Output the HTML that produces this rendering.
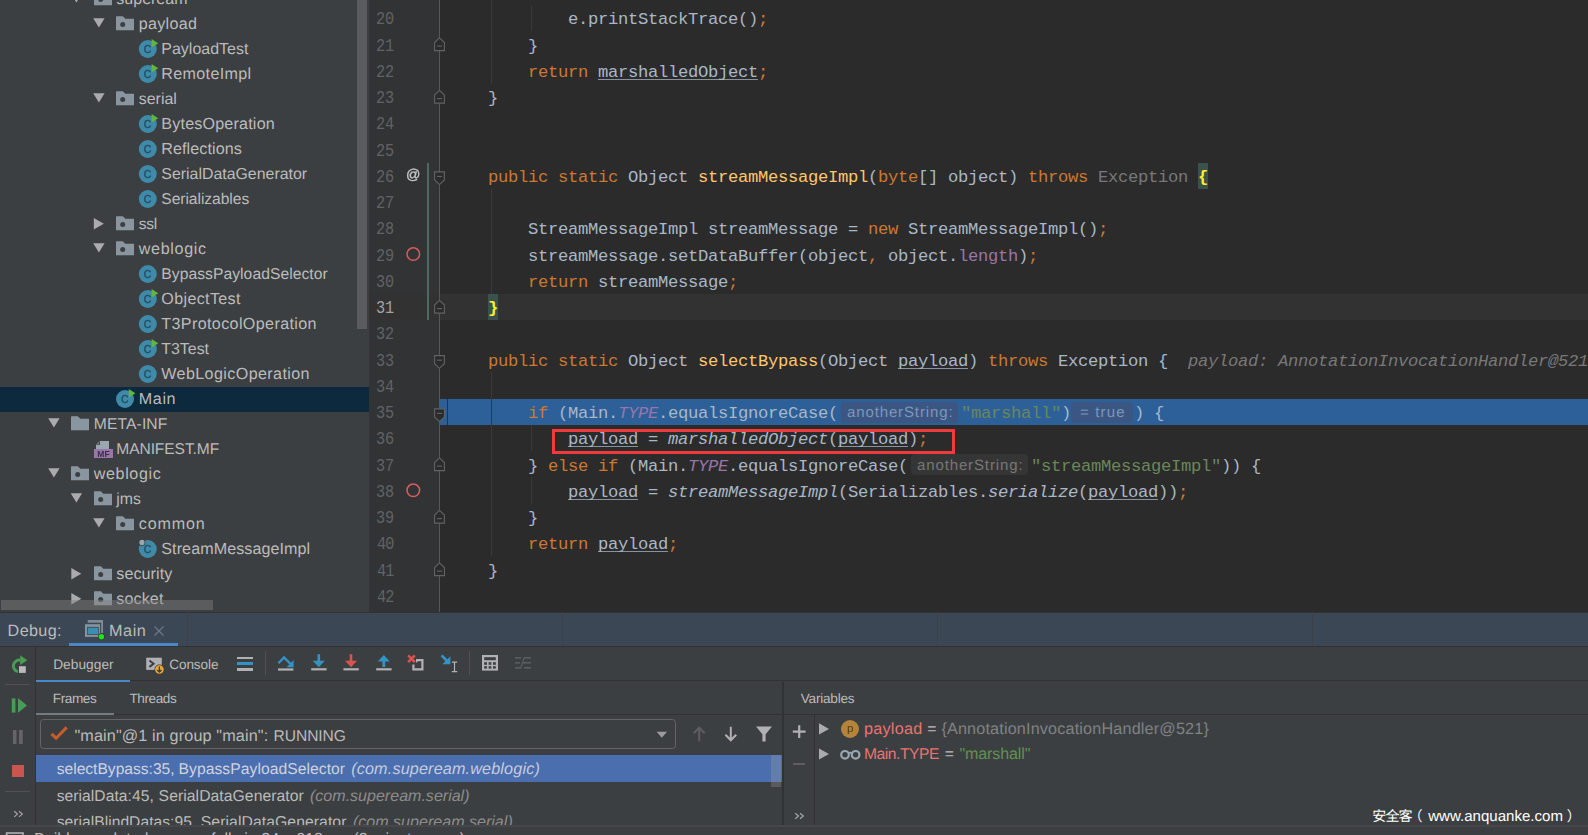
<!DOCTYPE html>
<html lang="en"><head><meta charset="utf-8"><title>IntelliJ IDEA - Debug</title>
<style>
html,body{margin:0;padding:0;background:#3c3f41;}
body{width:1588px;height:835px;overflow:hidden;position:relative;font-family:"Liberation Sans","Noto Sans CJK SC",sans-serif;}
#root{position:absolute;left:0;top:0;width:1588px;height:835px;overflow:hidden;background:#3c3f41;}
#root div,#root svg{pointer-events:none}
</style></head><body><div id="root">
<div style="position:absolute;left:0px;top:0px;width:369px;height:612px;background:#3c3f41;"></div>
<div style="position:absolute;left:0px;top:387px;width:369px;height:25px;background:#0d293e;"></div>
<svg style="position:absolute;left:70px;top:-7px;" width="13" height="11" viewBox="0 0 13 11"><g transform="translate(0.7,0.3)"><polygon points="0,0 11.4,0 5.7,9.2" fill="#a9abad"/></g></svg>
<svg style="position:absolute;left:94px;top:-9px;" width="18" height="15" viewBox="0 0 18 15"><g transform="translate(0,0.3)"><path d="M0,0.8 Q0,0 0.8,0 H6.9 L9.3,2.5 H18 V14 H0 Z" fill="#8a969f"/><circle cx="6.7" cy="8.2" r="2.5" fill="#3c3f41"/></g></svg>
<div style="position:absolute;left:116.30px;top:-11.00px;font-family:'Liberation Sans','Noto Sans CJK SC',sans-serif;font-size:16.02px;line-height:20px;color:#bbbbbb;white-space:pre;letter-spacing:0.003px;text-rendering:geometricPrecision;">supeream</div>
<svg style="position:absolute;left:93px;top:18px;" width="13" height="11" viewBox="0 0 13 11"><g transform="translate(0.2,0.3)"><polygon points="0,0 11.4,0 5.7,9.2" fill="#a9abad"/></g></svg>
<svg style="position:absolute;left:116px;top:16px;" width="18" height="15" viewBox="0 0 18 15"><g transform="translate(0,0.3)"><path d="M0,0.8 Q0,0 0.8,0 H6.9 L9.3,2.5 H18 V14 H0 Z" fill="#8a969f"/><circle cx="6.7" cy="8.2" r="2.5" fill="#3c3f41"/></g></svg>
<div style="position:absolute;left:138.80px;top:14.00px;font-family:'Liberation Sans','Noto Sans CJK SC',sans-serif;font-size:16.1px;line-height:20px;color:#bbbbbb;white-space:pre;letter-spacing:0.293px;text-rendering:geometricPrecision;">payload</div>
<svg style="position:absolute;left:138px;top:39px;overflow:visible;will-change:transform;" width="22" height="20" viewBox="0 0 22 20"><g transform="translate(0.8,0)"><circle cx="9" cy="10" r="9" fill="#3f8aa9"/><text x="8.8" y="13.7" text-anchor="middle" font-family="Liberation Sans,sans-serif" font-size="10.4" fill="#1f4b60" stroke="#1f4b60" stroke-width="0.3">C</text><polygon points="12.8,0 12.8,8.4 19.4,4.2" fill="#62b543"/></g></svg>
<div style="position:absolute;left:161.30px;top:40.00px;font-family:'Liberation Sans','Noto Sans CJK SC',sans-serif;font-size:15.98px;line-height:20px;color:#bbbbbb;white-space:pre;letter-spacing:0.004px;text-rendering:geometricPrecision;">PayloadTest</div>
<svg style="position:absolute;left:138px;top:64px;overflow:visible;will-change:transform;" width="22" height="20" viewBox="0 0 22 20"><g transform="translate(0.8,0)"><circle cx="9" cy="10" r="9" fill="#3f8aa9"/><text x="8.8" y="13.7" text-anchor="middle" font-family="Liberation Sans,sans-serif" font-size="10.4" fill="#1f4b60" stroke="#1f4b60" stroke-width="0.3">C</text><polygon points="12.8,0 12.8,8.4 19.4,4.2" fill="#62b543"/></g></svg>
<div style="position:absolute;left:161.30px;top:64.00px;font-family:'Liberation Sans','Noto Sans CJK SC',sans-serif;font-size:16.1px;line-height:20px;color:#bbbbbb;white-space:pre;letter-spacing:0.346px;text-rendering:geometricPrecision;">RemoteImpl</div>
<svg style="position:absolute;left:93px;top:93px;" width="13" height="11" viewBox="0 0 13 11"><g transform="translate(0.2,0.3)"><polygon points="0,0 11.4,0 5.7,9.2" fill="#a9abad"/></g></svg>
<svg style="position:absolute;left:116px;top:91px;" width="18" height="15" viewBox="0 0 18 15"><g transform="translate(0,0.3)"><path d="M0,0.8 Q0,0 0.8,0 H6.9 L9.3,2.5 H18 V14 H0 Z" fill="#8a969f"/><circle cx="6.7" cy="8.2" r="2.5" fill="#3c3f41"/></g></svg>
<div style="position:absolute;left:138.80px;top:90.00px;font-family:'Liberation Sans','Noto Sans CJK SC',sans-serif;font-size:15.92px;line-height:20px;color:#bbbbbb;white-space:pre;letter-spacing:0.004px;text-rendering:geometricPrecision;">serial</div>
<svg style="position:absolute;left:138px;top:114px;overflow:visible;will-change:transform;" width="22" height="20" viewBox="0 0 22 20"><g transform="translate(0.8,0)"><circle cx="9" cy="10" r="9" fill="#3f8aa9"/><text x="8.8" y="13.7" text-anchor="middle" font-family="Liberation Sans,sans-serif" font-size="10.4" fill="#1f4b60" stroke="#1f4b60" stroke-width="0.3">C</text><polygon points="12.8,0 12.8,8.4 19.4,4.2" fill="#62b543"/></g></svg>
<div style="position:absolute;left:161.30px;top:114.00px;font-family:'Liberation Sans','Noto Sans CJK SC',sans-serif;font-size:16.1px;line-height:20px;color:#bbbbbb;white-space:pre;letter-spacing:0.193px;text-rendering:geometricPrecision;">BytesOperation</div>
<svg style="position:absolute;left:138px;top:139px;overflow:visible;will-change:transform;" width="22" height="20" viewBox="0 0 22 20"><g transform="translate(0.8,0)"><circle cx="9" cy="10" r="9" fill="#3f8aa9"/><text x="8.8" y="13.7" text-anchor="middle" font-family="Liberation Sans,sans-serif" font-size="10.4" fill="#1f4b60" stroke="#1f4b60" stroke-width="0.3">C</text></g></svg>
<div style="position:absolute;left:161.30px;top:139.00px;font-family:'Liberation Sans','Noto Sans CJK SC',sans-serif;font-size:16.1px;line-height:20px;color:#bbbbbb;white-space:pre;letter-spacing:0.092px;text-rendering:geometricPrecision;">Reflections</div>
<svg style="position:absolute;left:138px;top:164px;overflow:visible;will-change:transform;" width="22" height="20" viewBox="0 0 22 20"><g transform="translate(0.8,0)"><circle cx="9" cy="10" r="9" fill="#3f8aa9"/><text x="8.8" y="13.7" text-anchor="middle" font-family="Liberation Sans,sans-serif" font-size="10.4" fill="#1f4b60" stroke="#1f4b60" stroke-width="0.3">C</text></g></svg>
<div style="position:absolute;left:161.30px;top:165.00px;font-family:'Liberation Sans','Noto Sans CJK SC',sans-serif;font-size:15.9px;line-height:20px;color:#bbbbbb;white-space:pre;letter-spacing:0.002px;text-rendering:geometricPrecision;">SerialDataGenerator</div>
<svg style="position:absolute;left:138px;top:189px;overflow:visible;will-change:transform;" width="22" height="20" viewBox="0 0 22 20"><g transform="translate(0.8,0)"><circle cx="9" cy="10" r="9" fill="#3f8aa9"/><text x="8.8" y="13.7" text-anchor="middle" font-family="Liberation Sans,sans-serif" font-size="10.4" fill="#1f4b60" stroke="#1f4b60" stroke-width="0.3">C</text></g></svg>
<div style="position:absolute;left:161.30px;top:190.00px;font-family:'Liberation Sans','Noto Sans CJK SC',sans-serif;font-size:15.6px;line-height:20px;color:#bbbbbb;white-space:pre;letter-spacing:-0.044px;text-rendering:geometricPrecision;">Serializables</div>
<svg style="position:absolute;left:93px;top:218px;" width="12" height="12" viewBox="0 0 12 12"><g transform="translate(0.8,0)"><polygon points="0,0 10,5.8 0,11.6" fill="#a9abad"/></g></svg>
<svg style="position:absolute;left:116px;top:216px;" width="18" height="15" viewBox="0 0 18 15"><g transform="translate(0,0.3)"><path d="M0,0.8 Q0,0 0.8,0 H6.9 L9.3,2.5 H18 V14 H0 Z" fill="#8a969f"/><circle cx="6.7" cy="8.2" r="2.5" fill="#3c3f41"/></g></svg>
<div style="position:absolute;left:138.80px;top:215.00px;font-family:'Liberation Sans','Noto Sans CJK SC',sans-serif;font-size:15.6px;line-height:20px;color:#bbbbbb;white-space:pre;letter-spacing:-0.349px;text-rendering:geometricPrecision;">ssl</div>
<svg style="position:absolute;left:93px;top:243px;" width="13" height="11" viewBox="0 0 13 11"><g transform="translate(0.2,0.3)"><polygon points="0,0 11.4,0 5.7,9.2" fill="#a9abad"/></g></svg>
<svg style="position:absolute;left:116px;top:241px;" width="18" height="15" viewBox="0 0 18 15"><g transform="translate(0,0.3)"><path d="M0,0.8 Q0,0 0.8,0 H6.9 L9.3,2.5 H18 V14 H0 Z" fill="#8a969f"/><circle cx="6.7" cy="8.2" r="2.5" fill="#3c3f41"/></g></svg>
<div style="position:absolute;left:138.80px;top:239.00px;font-family:'Liberation Sans','Noto Sans CJK SC',sans-serif;font-size:16.1px;line-height:20px;color:#bbbbbb;white-space:pre;letter-spacing:0.660px;text-rendering:geometricPrecision;">weblogic</div>
<svg style="position:absolute;left:138px;top:264px;overflow:visible;will-change:transform;" width="22" height="20" viewBox="0 0 22 20"><g transform="translate(0.8,0)"><circle cx="9" cy="10" r="9" fill="#3f8aa9"/><text x="8.8" y="13.7" text-anchor="middle" font-family="Liberation Sans,sans-serif" font-size="10.4" fill="#1f4b60" stroke="#1f4b60" stroke-width="0.3">C</text></g></svg>
<div style="position:absolute;left:161.30px;top:265.00px;font-family:'Liberation Sans','Noto Sans CJK SC',sans-serif;font-size:15.67px;line-height:20px;color:#bbbbbb;white-space:pre;letter-spacing:0.053px;text-rendering:geometricPrecision;">BypassPayloadSelector</div>
<svg style="position:absolute;left:138px;top:289px;overflow:visible;will-change:transform;" width="22" height="20" viewBox="0 0 22 20"><g transform="translate(0.8,0)"><circle cx="9" cy="10" r="9" fill="#3f8aa9"/><text x="8.8" y="13.7" text-anchor="middle" font-family="Liberation Sans,sans-serif" font-size="10.4" fill="#1f4b60" stroke="#1f4b60" stroke-width="0.3">C</text><polygon points="12.8,0 12.8,8.4 19.4,4.2" fill="#62b543"/></g></svg>
<div style="position:absolute;left:161.30px;top:289.00px;font-family:'Liberation Sans','Noto Sans CJK SC',sans-serif;font-size:16.1px;line-height:20px;color:#bbbbbb;white-space:pre;letter-spacing:0.349px;text-rendering:geometricPrecision;">ObjectTest</div>
<svg style="position:absolute;left:138px;top:314px;overflow:visible;will-change:transform;" width="22" height="20" viewBox="0 0 22 20"><g transform="translate(0.8,0)"><circle cx="9" cy="10" r="9" fill="#3f8aa9"/><text x="8.8" y="13.7" text-anchor="middle" font-family="Liberation Sans,sans-serif" font-size="10.4" fill="#1f4b60" stroke="#1f4b60" stroke-width="0.3">C</text></g></svg>
<div style="position:absolute;left:161.30px;top:314.00px;font-family:'Liberation Sans','Noto Sans CJK SC',sans-serif;font-size:16.1px;line-height:20px;color:#bbbbbb;white-space:pre;letter-spacing:0.375px;text-rendering:geometricPrecision;">T3ProtocolOperation</div>
<svg style="position:absolute;left:138px;top:339px;overflow:visible;will-change:transform;" width="22" height="20" viewBox="0 0 22 20"><g transform="translate(0.8,0)"><circle cx="9" cy="10" r="9" fill="#3f8aa9"/><text x="8.8" y="13.7" text-anchor="middle" font-family="Liberation Sans,sans-serif" font-size="10.4" fill="#1f4b60" stroke="#1f4b60" stroke-width="0.3">C</text><polygon points="12.8,0 12.8,8.4 19.4,4.2" fill="#62b543"/></g></svg>
<div style="position:absolute;left:161.30px;top:340.00px;font-family:'Liberation Sans','Noto Sans CJK SC',sans-serif;font-size:15.91px;line-height:20px;color:#bbbbbb;white-space:pre;letter-spacing:-0.003px;text-rendering:geometricPrecision;">T3Test</div>
<svg style="position:absolute;left:138px;top:364px;overflow:visible;will-change:transform;" width="22" height="20" viewBox="0 0 22 20"><g transform="translate(0.8,0)"><circle cx="9" cy="10" r="9" fill="#3f8aa9"/><text x="8.8" y="13.7" text-anchor="middle" font-family="Liberation Sans,sans-serif" font-size="10.4" fill="#1f4b60" stroke="#1f4b60" stroke-width="0.3">C</text></g></svg>
<div style="position:absolute;left:161.30px;top:364.00px;font-family:'Liberation Sans','Noto Sans CJK SC',sans-serif;font-size:16.1px;line-height:20px;color:#bbbbbb;white-space:pre;letter-spacing:0.394px;text-rendering:geometricPrecision;">WebLogicOperation</div>
<svg style="position:absolute;left:116px;top:389px;overflow:visible;will-change:transform;" width="21" height="20" viewBox="0 0 21 20"><circle cx="9" cy="10" r="9" fill="#3f8aa9"/><text x="8.8" y="13.7" text-anchor="middle" font-family="Liberation Sans,sans-serif" font-size="10.4" fill="#1f4b60" stroke="#1f4b60" stroke-width="0.3">C</text><polygon points="12.8,0 12.8,8.4 19.4,4.2" fill="#62b543"/></svg>
<div style="position:absolute;left:138.80px;top:389.00px;font-family:'Liberation Sans','Noto Sans CJK SC',sans-serif;font-size:16.1px;line-height:20px;color:#bbbbbb;white-space:pre;letter-spacing:0.620px;text-rendering:geometricPrecision;">Main</div>
<svg style="position:absolute;left:48px;top:418px;" width="13" height="11" viewBox="0 0 13 11"><g transform="translate(0.2,0.3)"><polygon points="0,0 11.4,0 5.7,9.2" fill="#a9abad"/></g></svg>
<svg style="position:absolute;left:71px;top:416px;" width="18" height="15" viewBox="0 0 18 15"><g transform="translate(0,0.3)"><path d="M0,0.8 Q0,0 0.8,0 H6.9 L9.3,2.5 H18 V14 H0 Z" fill="#8a969f"/></g></svg>
<div style="position:absolute;left:93.80px;top:415.00px;font-family:'Liberation Sans','Noto Sans CJK SC',sans-serif;font-size:15.66px;line-height:20px;color:#bbbbbb;white-space:pre;letter-spacing:0.114px;text-rendering:geometricPrecision;">META-INF</div>
<svg style="position:absolute;left:94px;top:441px;will-change:transform;" width="19" height="17" viewBox="0 0 19 17"><path d="M6,0 H15 V9 H2 V4 Z" fill="#9aa7b0"/><path d="M6,0 V4 H2 Z" fill="#3c3f41"/><path d="M5.2,0.4 V3.4 H2.2 Z" fill="#9aa7b0" opacity="0.6"/><rect x="0" y="8" width="19" height="9" fill="#9876aa"/><text x="9.5" y="15.6" text-anchor="middle" font-family="Liberation Sans,sans-serif" font-weight="bold" font-size="8.5" fill="#3c2f47">MF</text></svg>
<div style="position:absolute;left:116.30px;top:440.00px;font-family:'Liberation Sans','Noto Sans CJK SC',sans-serif;font-size:15.6px;line-height:20px;color:#bbbbbb;white-space:pre;letter-spacing:-0.104px;text-rendering:geometricPrecision;">MANIFEST.MF</div>
<svg style="position:absolute;left:48px;top:468px;" width="13" height="11" viewBox="0 0 13 11"><g transform="translate(0.2,0.3)"><polygon points="0,0 11.4,0 5.7,9.2" fill="#a9abad"/></g></svg>
<svg style="position:absolute;left:71px;top:466px;" width="18" height="15" viewBox="0 0 18 15"><g transform="translate(0,0.3)"><path d="M0,0.8 Q0,0 0.8,0 H6.9 L9.3,2.5 H18 V14 H0 Z" fill="#8a969f"/><circle cx="6.7" cy="8.2" r="2.5" fill="#3c3f41"/></g></svg>
<div style="position:absolute;left:93.80px;top:464.00px;font-family:'Liberation Sans','Noto Sans CJK SC',sans-serif;font-size:16.1px;line-height:20px;color:#bbbbbb;white-space:pre;letter-spacing:0.617px;text-rendering:geometricPrecision;">weblogic</div>
<svg style="position:absolute;left:70px;top:493px;" width="13" height="11" viewBox="0 0 13 11"><g transform="translate(0.7,0.3)"><polygon points="0,0 11.4,0 5.7,9.2" fill="#a9abad"/></g></svg>
<svg style="position:absolute;left:94px;top:491px;" width="18" height="15" viewBox="0 0 18 15"><g transform="translate(0,0.3)"><path d="M0,0.8 Q0,0 0.8,0 H6.9 L9.3,2.5 H18 V14 H0 Z" fill="#8a969f"/><circle cx="6.7" cy="8.2" r="2.5" fill="#3c3f41"/></g></svg>
<div style="position:absolute;left:116.30px;top:490.00px;font-family:'Liberation Sans','Noto Sans CJK SC',sans-serif;font-size:15.88px;line-height:20px;color:#bbbbbb;white-space:pre;letter-spacing:-0.033px;text-rendering:geometricPrecision;">jms</div>
<svg style="position:absolute;left:93px;top:518px;" width="13" height="11" viewBox="0 0 13 11"><g transform="translate(0.2,0.3)"><polygon points="0,0 11.4,0 5.7,9.2" fill="#a9abad"/></g></svg>
<svg style="position:absolute;left:116px;top:516px;" width="18" height="15" viewBox="0 0 18 15"><g transform="translate(0,0.3)"><path d="M0,0.8 Q0,0 0.8,0 H6.9 L9.3,2.5 H18 V14 H0 Z" fill="#8a969f"/><circle cx="6.7" cy="8.2" r="2.5" fill="#3c3f41"/></g></svg>
<div style="position:absolute;left:138.80px;top:514.00px;font-family:'Liberation Sans','Noto Sans CJK SC',sans-serif;font-size:16.1px;line-height:20px;color:#bbbbbb;white-space:pre;letter-spacing:0.826px;text-rendering:geometricPrecision;">common</div>
<svg style="position:absolute;left:138px;top:539px;overflow:visible;will-change:transform;" width="22" height="20" viewBox="0 0 22 20"><g transform="translate(0.8,0)"><circle cx="9" cy="10" r="9" fill="#3f8aa9"/><text x="8.8" y="13.7" text-anchor="middle" font-family="Liberation Sans,sans-serif" font-size="10.4" fill="#1f4b60" stroke="#1f4b60" stroke-width="0.3">C</text><circle cx="3.2" cy="3.4" r="3.4" fill="#3c3f41"/><circle cx="3.2" cy="3.4" r="2.6" fill="#9aa7b0"/></g></svg>
<div style="position:absolute;left:161.30px;top:539.00px;font-family:'Liberation Sans','Noto Sans CJK SC',sans-serif;font-size:16.1px;line-height:20px;color:#bbbbbb;white-space:pre;letter-spacing:0.080px;text-rendering:geometricPrecision;">StreamMessageImpl</div>
<svg style="position:absolute;left:71px;top:568px;" width="12" height="12" viewBox="0 0 12 12"><g transform="translate(0.3,0)"><polygon points="0,0 10,5.8 0,11.6" fill="#a9abad"/></g></svg>
<svg style="position:absolute;left:94px;top:566px;" width="18" height="15" viewBox="0 0 18 15"><g transform="translate(0,0.3)"><path d="M0,0.8 Q0,0 0.8,0 H6.9 L9.3,2.5 H18 V14 H0 Z" fill="#8a969f"/><circle cx="6.7" cy="8.2" r="2.5" fill="#3c3f41"/></g></svg>
<div style="position:absolute;left:116.30px;top:564.00px;font-family:'Liberation Sans','Noto Sans CJK SC',sans-serif;font-size:16.1px;line-height:20px;color:#bbbbbb;white-space:pre;letter-spacing:0.071px;text-rendering:geometricPrecision;">security</div>
<svg style="position:absolute;left:71px;top:593px;" width="12" height="12" viewBox="0 0 12 12"><g transform="translate(0.3,0)"><polygon points="0,0 10,5.8 0,11.6" fill="#a9abad"/></g></svg>
<svg style="position:absolute;left:94px;top:591px;" width="18" height="15" viewBox="0 0 18 15"><g transform="translate(0,0.3)"><path d="M0,0.8 Q0,0 0.8,0 H6.9 L9.3,2.5 H18 V14 H0 Z" fill="#8a969f"/><circle cx="6.7" cy="8.2" r="2.5" fill="#3c3f41"/></g></svg>
<div style="position:absolute;left:116.30px;top:589.00px;font-family:'Liberation Sans','Noto Sans CJK SC',sans-serif;font-size:16.1px;line-height:20px;color:#bbbbbb;white-space:pre;letter-spacing:0.111px;text-rendering:geometricPrecision;">socket</div>
<div style="position:absolute;left:357px;top:0px;width:10px;height:329px;background:#595b5d;"></div>
<div style="position:absolute;left:1px;top:600px;width:212px;height:10px;background:rgba(128,128,128,0.45);"></div>
<div style="position:absolute;left:369px;top:0px;width:1219px;height:612px;background:#2b2b2b;"></div>
<div style="position:absolute;left:369px;top:0px;width:70px;height:612px;background:#313335;"></div>
<div style="position:absolute;left:369px;top:294px;width:1219px;height:26px;background:#323232;"></div>
<div style="position:absolute;left:440px;top:399px;width:1148px;height:26px;background:#2d6099;"></div>
<div style="position:absolute;left:447px;top:399px;width:1px;height:26px;background:#2f3336;"></div>
<div style="position:absolute;left:427px;top:163px;width:2px;height:157px;background:#4c6a61;"></div>
<div style="position:absolute;left:439px;top:0px;width:1px;height:612px;background:#555759;"></div>
<div style="position:absolute;left:491px;top:0px;width:1px;height:83.65px;background:#393939;"></div>
<div style="position:absolute;left:491px;top:188.65px;width:1px;height:105px;background:#393939;"></div>
<div style="position:absolute;left:491px;top:372.4px;width:1px;height:183.75px;background:#393939;"></div>
<div style="position:absolute;left:531px;top:5.5px;width:1px;height:25.65px;background:#393939;"></div>
<div style="position:absolute;left:531px;top:424.9px;width:1px;height:26.25px;background:#393939;"></div>
<div style="position:absolute;left:531px;top:477.4px;width:1px;height:26.25px;background:#393939;"></div>
<div style="position:absolute;left:491px;top:399px;width:1px;height:26px;background:#33383d;"></div>
<div style="position:absolute;left:488px;top:294px;width:10px;height:26px;background:#3b514d;"></div>
<div style="position:absolute;left:1198px;top:163px;width:10px;height:26px;background:#3b514d;"></div>
<div style="position:absolute;left:375.95px;top:-19.85px;font-family:'Liberation Mono',monospace;font-size:18px;line-height:26px;color:#606366;white-space:pre;letter-spacing:-0.163px;transform:scaleX(0.845);transform-origin:0 0;">19</div>
<div style="position:absolute;left:375.95px;top:6.40px;font-family:'Liberation Mono',monospace;font-size:18px;line-height:26px;color:#606366;white-space:pre;letter-spacing:-0.163px;transform:scaleX(0.845);transform-origin:0 0;">20</div>
<div style="position:absolute;left:375.95px;top:32.65px;font-family:'Liberation Mono',monospace;font-size:18px;line-height:26px;color:#606366;white-space:pre;letter-spacing:-0.163px;transform:scaleX(0.845);transform-origin:0 0;">21</div>
<div style="position:absolute;left:375.95px;top:58.90px;font-family:'Liberation Mono',monospace;font-size:18px;line-height:26px;color:#606366;white-space:pre;letter-spacing:-0.163px;transform:scaleX(0.845);transform-origin:0 0;">22</div>
<div style="position:absolute;left:375.95px;top:85.15px;font-family:'Liberation Mono',monospace;font-size:18px;line-height:26px;color:#606366;white-space:pre;letter-spacing:-0.163px;transform:scaleX(0.845);transform-origin:0 0;">23</div>
<div style="position:absolute;left:375.95px;top:111.40px;font-family:'Liberation Mono',monospace;font-size:18px;line-height:26px;color:#606366;white-space:pre;letter-spacing:-0.163px;transform:scaleX(0.845);transform-origin:0 0;">24</div>
<div style="position:absolute;left:375.95px;top:137.65px;font-family:'Liberation Mono',monospace;font-size:18px;line-height:26px;color:#606366;white-space:pre;letter-spacing:-0.163px;transform:scaleX(0.845);transform-origin:0 0;">25</div>
<div style="position:absolute;left:375.95px;top:163.90px;font-family:'Liberation Mono',monospace;font-size:18px;line-height:26px;color:#606366;white-space:pre;letter-spacing:-0.163px;transform:scaleX(0.845);transform-origin:0 0;">26</div>
<div style="position:absolute;left:375.95px;top:190.15px;font-family:'Liberation Mono',monospace;font-size:18px;line-height:26px;color:#606366;white-space:pre;letter-spacing:-0.163px;transform:scaleX(0.845);transform-origin:0 0;">27</div>
<div style="position:absolute;left:375.95px;top:216.40px;font-family:'Liberation Mono',monospace;font-size:18px;line-height:26px;color:#606366;white-space:pre;letter-spacing:-0.163px;transform:scaleX(0.845);transform-origin:0 0;">28</div>
<div style="position:absolute;left:375.95px;top:242.65px;font-family:'Liberation Mono',monospace;font-size:18px;line-height:26px;color:#606366;white-space:pre;letter-spacing:-0.163px;transform:scaleX(0.845);transform-origin:0 0;">29</div>
<div style="position:absolute;left:375.95px;top:268.90px;font-family:'Liberation Mono',monospace;font-size:18px;line-height:26px;color:#606366;white-space:pre;letter-spacing:-0.163px;transform:scaleX(0.845);transform-origin:0 0;">30</div>
<div style="position:absolute;left:375.95px;top:295.15px;font-family:'Liberation Mono',monospace;font-size:18px;line-height:26px;color:#a4a3a3;white-space:pre;letter-spacing:-0.163px;transform:scaleX(0.845);transform-origin:0 0;">31</div>
<div style="position:absolute;left:375.95px;top:321.40px;font-family:'Liberation Mono',monospace;font-size:18px;line-height:26px;color:#606366;white-space:pre;letter-spacing:-0.163px;transform:scaleX(0.845);transform-origin:0 0;">32</div>
<div style="position:absolute;left:375.95px;top:347.65px;font-family:'Liberation Mono',monospace;font-size:18px;line-height:26px;color:#606366;white-space:pre;letter-spacing:-0.163px;transform:scaleX(0.845);transform-origin:0 0;">33</div>
<div style="position:absolute;left:375.95px;top:373.90px;font-family:'Liberation Mono',monospace;font-size:18px;line-height:26px;color:#606366;white-space:pre;letter-spacing:-0.163px;transform:scaleX(0.845);transform-origin:0 0;">34</div>
<div style="position:absolute;left:375.95px;top:400.15px;font-family:'Liberation Mono',monospace;font-size:18px;line-height:26px;color:#606366;white-space:pre;letter-spacing:-0.163px;transform:scaleX(0.845);transform-origin:0 0;">35</div>
<div style="position:absolute;left:375.95px;top:426.40px;font-family:'Liberation Mono',monospace;font-size:18px;line-height:26px;color:#606366;white-space:pre;letter-spacing:-0.163px;transform:scaleX(0.845);transform-origin:0 0;">36</div>
<div style="position:absolute;left:375.95px;top:452.65px;font-family:'Liberation Mono',monospace;font-size:18px;line-height:26px;color:#606366;white-space:pre;letter-spacing:-0.163px;transform:scaleX(0.845);transform-origin:0 0;">37</div>
<div style="position:absolute;left:375.95px;top:478.90px;font-family:'Liberation Mono',monospace;font-size:18px;line-height:26px;color:#606366;white-space:pre;letter-spacing:-0.163px;transform:scaleX(0.845);transform-origin:0 0;">38</div>
<div style="position:absolute;left:375.95px;top:505.15px;font-family:'Liberation Mono',monospace;font-size:18px;line-height:26px;color:#606366;white-space:pre;letter-spacing:-0.163px;transform:scaleX(0.845);transform-origin:0 0;">39</div>
<div style="position:absolute;left:376.80px;top:531.40px;font-family:'Liberation Mono',monospace;font-size:18px;line-height:26px;color:#606366;white-space:pre;letter-spacing:-1.163px;transform:scaleX(0.845);transform-origin:0 0;">40</div>
<div style="position:absolute;left:376.80px;top:557.65px;font-family:'Liberation Mono',monospace;font-size:18px;line-height:26px;color:#606366;white-space:pre;letter-spacing:-1.163px;transform:scaleX(0.845);transform-origin:0 0;">41</div>
<div style="position:absolute;left:376.80px;top:583.90px;font-family:'Liberation Mono',monospace;font-size:18px;line-height:26px;color:#606366;white-space:pre;letter-spacing:-1.163px;transform:scaleX(0.845);transform-origin:0 0;">42</div>
<svg style="position:absolute;left:434px;top:37px;" width="11" height="16" viewBox="0 0 11 16"><g transform="translate(0,0.35)"><path d="M5.5,0.6 L10.4,5.2 V13.3 H0.6 V5.2 Z" fill="#2b2b2b" stroke="#616365" stroke-width="1.1"/><rect x="3" y="8.2" width="5" height="1.1" fill="#616365"/></g></svg>
<svg style="position:absolute;left:434px;top:89px;" width="11" height="16" viewBox="0 0 11 16"><g transform="translate(0,0.85)"><path d="M5.5,0.6 L10.4,5.2 V13.3 H0.6 V5.2 Z" fill="#2b2b2b" stroke="#616365" stroke-width="1.1"/><rect x="3" y="8.2" width="5" height="1.1" fill="#616365"/></g></svg>
<svg style="position:absolute;left:434px;top:299px;" width="11" height="16" viewBox="0 0 11 16"><g transform="translate(0,0.85)"><path d="M5.5,0.6 L10.4,5.2 V13.3 H0.6 V5.2 Z" fill="#2b2b2b" stroke="#616365" stroke-width="1.1"/><rect x="3" y="8.2" width="5" height="1.1" fill="#616365"/></g></svg>
<svg style="position:absolute;left:434px;top:457px;" width="11" height="16" viewBox="0 0 11 16"><g transform="translate(0,0.35)"><path d="M5.5,0.6 L10.4,5.2 V13.3 H0.6 V5.2 Z" fill="#2b2b2b" stroke="#616365" stroke-width="1.1"/><rect x="3" y="8.2" width="5" height="1.1" fill="#616365"/></g></svg>
<svg style="position:absolute;left:434px;top:509px;" width="11" height="16" viewBox="0 0 11 16"><g transform="translate(0,0.85)"><path d="M5.5,0.6 L10.4,5.2 V13.3 H0.6 V5.2 Z" fill="#2b2b2b" stroke="#616365" stroke-width="1.1"/><rect x="3" y="8.2" width="5" height="1.1" fill="#616365"/></g></svg>
<svg style="position:absolute;left:434px;top:562px;" width="11" height="16" viewBox="0 0 11 16"><g transform="translate(0,0.35)"><path d="M5.5,0.6 L10.4,5.2 V13.3 H0.6 V5.2 Z" fill="#2b2b2b" stroke="#616365" stroke-width="1.1"/><rect x="3" y="8.2" width="5" height="1.1" fill="#616365"/></g></svg>
<svg style="position:absolute;left:434px;top:171px;" width="11" height="16" viewBox="0 0 11 16"><g transform="translate(0,0.3)"><path d="M0.6,0.6 H10.4 V8.7 L5.5,13.3 L0.6,8.7 Z" fill="#2b2b2b" stroke="#616365" stroke-width="1.1"/><rect x="3" y="4.6" width="5" height="1.1" fill="#616365"/></g></svg>
<svg style="position:absolute;left:434px;top:355px;" width="11" height="16" viewBox="0 0 11 16"><g transform="translate(0,0.05)"><path d="M0.6,0.6 H10.4 V8.7 L5.5,13.3 L0.6,8.7 Z" fill="#2b2b2b" stroke="#616365" stroke-width="1.1"/><rect x="3" y="4.6" width="5" height="1.1" fill="#616365"/></g></svg>
<svg style="position:absolute;left:434px;top:408px;" width="11" height="16" viewBox="0 0 11 16"><g transform="translate(0,0.25)"><path d="M0.6,0.6 H10.4 V8.7 L5.5,13.3 L0.6,8.7 Z" fill="#2b2b2b" stroke="#616365" stroke-width="1.1"/><rect x="3" y="4.6" width="5" height="1.1" fill="#616365"/></g></svg>
<div style="position:absolute;left:406.00px;top:165.40px;font-family:'Liberation Sans','Noto Sans CJK SC',sans-serif;font-size:14.2px;line-height:20px;color:#c8c8c8;white-space:pre;will-change:transform;-webkit-text-stroke:0.35px #c8c8c8;text-rendering:geometricPrecision;">@</div>
<svg style="position:absolute;left:405px;top:246px;" width="17" height="17" viewBox="0 0 17 17"><g transform="translate(0.3,0.05)"><circle cx="8" cy="8" r="6.3" fill="none" stroke="#db5c5c" stroke-width="1.5"/></g></svg>
<svg style="position:absolute;left:405px;top:482px;" width="17" height="17" viewBox="0 0 17 17"><g transform="translate(0.3,0.3)"><circle cx="8" cy="8" r="6.3" fill="none" stroke="#db5c5c" stroke-width="1.5"/></g></svg>
<div style="position:absolute;left:448px;top:-19.55px;font-family:'Liberation Mono',monospace;font-size:17.2px;line-height:26px;letter-spacing:-0.3148px;color:#a9b7c6;white-space:pre">        } <span style="color:#cc7832;">catch</span> (IOException e) {</div>
<div style="position:absolute;left:448px;top:7.40px;font-family:'Liberation Mono',monospace;font-size:17.2px;line-height:26px;letter-spacing:-0.3148px;color:#a9b7c6;white-space:pre">            e.printStackTrace()<span style="color:#cc7832;">;</span></div>
<div style="position:absolute;left:448px;top:33.65px;font-family:'Liberation Mono',monospace;font-size:17.2px;line-height:26px;letter-spacing:-0.3148px;color:#a9b7c6;white-space:pre">        }</div>
<div style="position:absolute;left:448px;top:59.90px;font-family:'Liberation Mono',monospace;font-size:17.2px;line-height:26px;letter-spacing:-0.3148px;color:#a9b7c6;white-space:pre">        <span style="color:#cc7832;">return</span> <span style="color:#a9b7c6;text-decoration:underline;text-decoration-thickness:1px;text-decoration-color:rgba(169,183,198,0.75);text-underline-offset:1.6px;text-decoration-skip-ink:none;">marshalledObject</span><span style="color:#cc7832;">;</span></div>
<div style="position:absolute;left:448px;top:86.15px;font-family:'Liberation Mono',monospace;font-size:17.2px;line-height:26px;letter-spacing:-0.3148px;color:#a9b7c6;white-space:pre">    }</div>
<div style="position:absolute;left:448px;top:164.90px;font-family:'Liberation Mono',monospace;font-size:17.2px;line-height:26px;letter-spacing:-0.3148px;color:#a9b7c6;white-space:pre">    <span style="color:#cc7832;">public static</span> Object <span style="color:#ffc66d;">streamMessageImpl</span>(<span style="color:#cc7832;">byte</span>[] object) <span style="color:#cc7832;">throws</span> <span style="color:#787878;">Exception</span> <span style="color:#ffef28;font-weight:bold;">{</span></div>
<div style="position:absolute;left:448px;top:217.40px;font-family:'Liberation Mono',monospace;font-size:17.2px;line-height:26px;letter-spacing:-0.3148px;color:#a9b7c6;white-space:pre">        StreamMessageImpl streamMessage = <span style="color:#cc7832;">new</span> StreamMessageImpl()<span style="color:#cc7832;">;</span></div>
<div style="position:absolute;left:448px;top:243.65px;font-family:'Liberation Mono',monospace;font-size:17.2px;line-height:26px;letter-spacing:-0.3148px;color:#a9b7c6;white-space:pre">        streamMessage.setDataBuffer(object<span style="color:#cc7832;">,</span> object.<span style="color:#9876aa;">length</span>)<span style="color:#cc7832;">;</span></div>
<div style="position:absolute;left:448px;top:269.90px;font-family:'Liberation Mono',monospace;font-size:17.2px;line-height:26px;letter-spacing:-0.3148px;color:#a9b7c6;white-space:pre">        <span style="color:#cc7832;">return</span> streamMessage<span style="color:#cc7832;">;</span></div>
<div style="position:absolute;left:448px;top:296.15px;font-family:'Liberation Mono',monospace;font-size:17.2px;line-height:26px;letter-spacing:-0.3148px;color:#a9b7c6;white-space:pre">    <span style="color:#ffef28;font-weight:bold;">}</span></div>
<div style="position:absolute;left:448px;top:348.65px;font-family:'Liberation Mono',monospace;font-size:17.2px;line-height:26px;letter-spacing:-0.3148px;color:#a9b7c6;white-space:pre">    <span style="color:#cc7832;">public static</span> Object <span style="color:#ffc66d;">selectBypass</span>(Object <span style="color:#a9b7c6;text-decoration:underline;text-decoration-thickness:1px;text-decoration-color:rgba(169,183,198,0.75);text-underline-offset:1.6px;text-decoration-skip-ink:none;">payload</span>) <span style="color:#cc7832;">throws</span> Exception {<span style="color:#787878;font-style:italic;">  payload: AnnotationInvocationHandler@521</span></div>
<div style="position:absolute;left:448px;top:401.15px;font-family:'Liberation Mono',monospace;font-size:17.2px;line-height:26px;letter-spacing:-0.3148px;color:#a9b7c6;white-space:pre">        <span style="color:#cc7832;">if</span> (Main.<span style="color:#9876aa;font-style:italic;">TYPE</span>.equalsIgnoreCase(<span style="display:inline-block;width:123px;height:26px;vertical-align:top;position:relative;letter-spacing:0"><span style="position:absolute;left:2.6px;top:0.40px;width:117.2px;height:21px;border-radius:4px;background:#3b5682"></span><span style="position:absolute;left:9.00px;top:-1.10px;text-rendering:geometricPrecision;font-family:'Liberation Sans','Noto Sans CJK SC',sans-serif;font-size:15px;line-height:26px;color:#7d97ba;letter-spacing:0.874px">anotherString:</span></span><span style="color:#6a8759;">"marshall"</span>)<span style="display:inline-block;width:63px;height:26px;vertical-align:top;position:relative;letter-spacing:0"><span style="position:absolute;left:-0.3px;top:0.40px;width:62px;height:21px;border-radius:4px;background:#3b5682"></span><span style="position:absolute;left:8.90px;top:-1.10px;text-rendering:geometricPrecision;font-family:'Liberation Sans','Noto Sans CJK SC',sans-serif;font-size:15px;line-height:26px;color:#7d97ba;letter-spacing:1.164px">= true</span></span>) {</div>
<div style="position:absolute;left:448px;top:427.40px;font-family:'Liberation Mono',monospace;font-size:17.2px;line-height:26px;letter-spacing:-0.3148px;color:#a9b7c6;white-space:pre">            <span style="color:#a9b7c6;text-decoration:underline;text-decoration-thickness:1px;text-decoration-color:rgba(169,183,198,0.75);text-underline-offset:1.6px;text-decoration-skip-ink:none;">payload</span> = <span style="color:#a9b7c6;font-style:italic;">marshalledObject</span>(<span style="color:#a9b7c6;text-decoration:underline;text-decoration-thickness:1px;text-decoration-color:rgba(169,183,198,0.75);text-underline-offset:1.6px;text-decoration-skip-ink:none;">payload</span>)<span style="color:#cc7832;">;</span></div>
<div style="position:absolute;left:448px;top:453.65px;font-family:'Liberation Mono',monospace;font-size:17.2px;line-height:26px;letter-spacing:-0.3148px;color:#a9b7c6;white-space:pre">        } <span style="color:#cc7832;">else if</span> (Main.<span style="color:#9876aa;font-style:italic;">TYPE</span>.equalsIgnoreCase(<span style="display:inline-block;width:123px;height:26px;vertical-align:top;position:relative;letter-spacing:0"><span style="position:absolute;left:2.6px;top:0.40px;width:117.2px;height:21px;border-radius:4px;background:#353535"></span><span style="position:absolute;left:9.00px;top:-1.10px;text-rendering:geometricPrecision;font-family:'Liberation Sans','Noto Sans CJK SC',sans-serif;font-size:15px;line-height:26px;color:#787878;letter-spacing:0.874px">anotherString:</span></span><span style="color:#6a8759;">"streamMessageImpl"</span>)) {</div>
<div style="position:absolute;left:448px;top:479.90px;font-family:'Liberation Mono',monospace;font-size:17.2px;line-height:26px;letter-spacing:-0.3148px;color:#a9b7c6;white-space:pre">            <span style="color:#a9b7c6;text-decoration:underline;text-decoration-thickness:1px;text-decoration-color:rgba(169,183,198,0.75);text-underline-offset:1.6px;text-decoration-skip-ink:none;">payload</span> = <span style="color:#a9b7c6;font-style:italic;">streamMessageImpl</span>(Serializables.<span style="color:#a9b7c6;font-style:italic;">serialize</span>(<span style="color:#a9b7c6;text-decoration:underline;text-decoration-thickness:1px;text-decoration-color:rgba(169,183,198,0.75);text-underline-offset:1.6px;text-decoration-skip-ink:none;">payload</span>))<span style="color:#cc7832;">;</span></div>
<div style="position:absolute;left:448px;top:506.15px;font-family:'Liberation Mono',monospace;font-size:17.2px;line-height:26px;letter-spacing:-0.3148px;color:#a9b7c6;white-space:pre">        }</div>
<div style="position:absolute;left:448px;top:532.40px;font-family:'Liberation Mono',monospace;font-size:17.2px;line-height:26px;letter-spacing:-0.3148px;color:#a9b7c6;white-space:pre">        <span style="color:#cc7832;">return</span> <span style="color:#a9b7c6;text-decoration:underline;text-decoration-thickness:1px;text-decoration-color:rgba(169,183,198,0.75);text-underline-offset:1.6px;text-decoration-skip-ink:none;">payload</span><span style="color:#cc7832;">;</span></div>
<div style="position:absolute;left:448px;top:558.65px;font-family:'Liberation Mono',monospace;font-size:17.2px;line-height:26px;letter-spacing:-0.3148px;color:#a9b7c6;white-space:pre">    }</div>
<div style="position:absolute;left:552px;top:429px;width:403px;height:25px;box-sizing:border-box;border:3px solid #ef3b3b"></div>
<div style="position:absolute;left:0px;top:612px;width:1588px;height:223px;background:#3c3f41;"></div>
<div style="position:absolute;left:0px;top:612px;width:1588px;height:1px;background:#323232;"></div>
<div style="position:absolute;left:0px;top:613px;width:1588px;height:33px;background:#3b4754;"></div>
<div style="position:absolute;left:187px;top:612px;width:1px;height:35px;background:#3d4146;"></div>
<div style="position:absolute;left:562px;top:612px;width:1px;height:35px;background:#3d4146;"></div>
<div style="position:absolute;left:937px;top:612px;width:1px;height:35px;background:#3d4146;"></div>
<div style="position:absolute;left:1312px;top:612px;width:1px;height:35px;background:#3d4146;"></div>
<div style="position:absolute;left:0px;top:646px;width:1588px;height:1px;background:#323232;"></div>
<div style="position:absolute;left:7.60px;top:621.20px;font-family:'Liberation Sans','Noto Sans CJK SC',sans-serif;font-size:16.2px;line-height:20px;color:#bbbbbb;white-space:pre;letter-spacing:0.359px;text-rendering:geometricPrecision;">Debug:</div>
<svg style="position:absolute;left:85px;top:619px;" width="20" height="23" viewBox="0 0 20 23"><g transform="translate(0,0.3)"><rect x="2.7" y="0.7" width="15.3" height="2.7" fill="#7f8b96"/><rect x="16.2" y="0.7" width="1.8" height="13" fill="#7f8b96"/><rect x="0" y="4.9" width="15.1" height="12.7" fill="#8593a0"/><rect x="2" y="7.6" width="11.8" height="7.9" fill="#3b4754"/><rect x="2.7" y="8.4" width="10.4" height="6.3" fill="#3d8eb0"/><circle cx="16.4" cy="17.4" r="3.4" fill="#2f3a45"/><circle cx="16.4" cy="17.4" r="2.7" fill="#0aee0a"/></g></svg>
<div style="position:absolute;left:109.00px;top:621.20px;font-family:'Liberation Sans','Noto Sans CJK SC',sans-serif;font-size:16.2px;line-height:20px;color:#bbbbbb;white-space:pre;letter-spacing:0.570px;text-rendering:geometricPrecision;">Main</div>
<svg style="position:absolute;left:154px;top:626px;" width="10" height="10" viewBox="0 0 10 10"><path d="M0.5,0.5 L9.5,9.5 M9.5,0.5 L0.5,9.5" stroke="#6e7a86" stroke-width="1.1" fill="none"/></svg>
<div style="position:absolute;left:69px;top:643px;width:109px;height:3px;background:#4a88c7;"></div>
<div style="position:absolute;left:35px;top:647px;width:1px;height:178px;background:#323232;"></div>
<svg style="position:absolute;left:9px;top:655px;" width="20" height="19" viewBox="0 0 20 19"><path d="M11.6,5.3 A5.8,5.8 0 1 0 8.8,16.6" fill="none" stroke="#499c54" stroke-width="3"/><polygon points="11.2,0.3 18.2,5.3 11.2,9.9" fill="#499c54"/><rect x="10" y="11.2" width="6.8" height="6.7" fill="#b9b9b9"/></svg>
<div style="position:absolute;left:5px;top:684px;width:25px;height:1px;background:#515151;"></div>
<svg style="position:absolute;left:11px;top:698px;" width="17" height="15" viewBox="0 0 17 15"><rect x="0.8" y="0.4" width="3.6" height="14.2" fill="#499c54"/><polygon points="7,0 16,7.4 7,14.8" fill="#499c54"/></svg>
<svg style="position:absolute;left:12px;top:730px;" width="12" height="14" viewBox="0 0 12 14"><g transform="translate(0.5,0)"><rect x="0.4" y="0" width="3.6" height="14" fill="#636567"/><rect x="6.6" y="0" width="3.6" height="14" fill="#636567"/></g></svg>
<div style="position:absolute;left:12px;top:765px;width:12.4px;height:12.2px;background:#c95450;"></div>
<div style="position:absolute;left:5px;top:791px;width:25px;height:1px;background:#515151;"></div>
<svg style="position:absolute;left:13px;top:810px;" width="11" height="8" viewBox="0 0 11 8"><g transform="translate(0.6,0.8)"><path d="M0.6,0.5 L3.9,3.3 L0.6,6.1 M5.4,0.5 L8.7,3.3 L5.4,6.1" fill="none" stroke="#a4a6a8" stroke-width="1.2"/></g></svg>
<div style="position:absolute;left:53.20px;top:655.10px;font-family:'Liberation Sans','Noto Sans CJK SC',sans-serif;font-size:13.7px;line-height:20px;color:#bbbbbb;white-space:pre;letter-spacing:0.048px;text-rendering:geometricPrecision;">Debugger</div>
<div style="position:absolute;left:36px;top:680px;width:1552px;height:1px;background:#323232;"></div>
<div style="position:absolute;left:36px;top:680px;width:94px;height:2px;background:#4a88c7;"></div>
<svg style="position:absolute;left:146px;top:657px;" width="19" height="19" viewBox="0 0 19 19"><g transform="translate(0,0.5)"><rect x="0.2" y="0.2" width="15.6" height="12.2" fill="#afb1b3"/><path d="M3.4,3 L7.6,6.2 L3.4,9.4" fill="none" stroke="#3c3f41" stroke-width="2"/><circle cx="13.4" cy="12" r="5" fill="#3c3f41"/><circle cx="13.4" cy="12" r="4.3" fill="#f0a732"/><path d="M13.4,9 V14.4 M11.2,12.4 L13.4,14.6 L15.6,12.4" fill="none" stroke="#3c3f41" stroke-width="1.4"/></g></svg>
<div style="position:absolute;left:169.20px;top:655.10px;font-family:'Liberation Sans','Noto Sans CJK SC',sans-serif;font-size:13.6px;line-height:20px;color:#bbbbbb;white-space:pre;letter-spacing:-0.086px;text-rendering:geometricPrecision;">Console</div>
<div style="position:absolute;left:237.3px;top:656.9px;width:15.6px;height:2.5px;background:#afb1b3;"></div>
<div style="position:absolute;left:237.3px;top:661.7px;width:15.6px;height:3.8px;background:#3592c4;"></div>
<div style="position:absolute;left:237.3px;top:668px;width:15.6px;height:2.6px;background:#afb1b3;"></div>
<div style="position:absolute;left:265px;top:651px;width:1px;height:24px;background:#515151;"></div>
<svg style="position:absolute;left:277px;top:654px;" width="18" height="18" viewBox="0 0 18 18"><path d="M1.4,9.2 L7,3.4 L14,10.4" fill="none" stroke="#3592c4" stroke-width="2.2"/><polygon points="16.6,6 16.6,13.2 9.6,13.2" fill="#3592c4"/><rect x="1" y="14.4" width="15.4" height="2.2" fill="#afb1b3"/></svg>
<svg style="position:absolute;left:310px;top:654px;" width="18" height="18" viewBox="0 0 18 18"><g transform="translate(0.8,0)"><rect x="6.7" y="0.2" width="2.6" height="8" fill="#3592c4"/><polygon points="2,6.8 14,6.8 8,13.2" fill="#3592c4"/><rect x="0.4" y="14.2" width="15.4" height="2.2" fill="#afb1b3"/></g></svg>
<svg style="position:absolute;left:343px;top:654px;" width="17" height="18" viewBox="0 0 17 18"><rect x="6.7" y="0.2" width="2.6" height="8" fill="#d9534f"/><polygon points="2,6.8 14,6.8 8,13.2" fill="#d9534f"/><rect x="0.4" y="14.2" width="15.4" height="2.2" fill="#afb1b3"/></svg>
<svg style="position:absolute;left:375px;top:654px;" width="18" height="18" viewBox="0 0 18 18"><g transform="translate(0.8,0)"><rect x="6.6" y="5.4" width="2.8" height="7.6" fill="#3592c4"/><polygon points="2,7.6 14,7.6 8,1" fill="#3592c4"/><rect x="0.4" y="14.2" width="15.4" height="2.2" fill="#afb1b3"/></g></svg>
<svg style="position:absolute;left:407px;top:654px;" width="19" height="18" viewBox="0 0 19 18"><g transform="translate(0.4,0)"><path d="M0.8,1.4 L7.4,8.2 M7.4,1.4 L0.8,8.2" stroke="#d9534f" stroke-width="2.6" fill="none"/><path d="M9.6,6.2 H15 V15.4 H6 V10.4" fill="none" stroke="#afb1b3" stroke-width="2.2"/><polygon points="8.6,5 12.6,5 8.6,9" fill="#afb1b3"/></g></svg>
<svg style="position:absolute;left:440px;top:654px;" width="20" height="19" viewBox="0 0 20 19"><g transform="translate(0.4,0)"><path d="M1.2,1.4 L7.4,7.8" stroke="#3592c4" stroke-width="2.8" fill="none"/><polygon points="10,2.2 10,10.2 2,10.2" fill="#3592c4"/><path d="M11.4,8.2 H16.8 M14.1,8.2 V17.6 M11.4,17.6 H16.8" stroke="#afb1b3" stroke-width="1.2" fill="none"/></g></svg>
<div style="position:absolute;left:469px;top:651px;width:1px;height:24px;background:#515151;"></div>
<svg style="position:absolute;left:482px;top:655px;" width="16" height="16" viewBox="0 0 16 16"><rect x="0" y="0" width="16" height="15.6" fill="#afb1b3"/><rect x="2.2" y="2.2" width="11.6" height="3" fill="#3c3f41"/><g fill="#3c3f41"><rect x="2.2" y="7.2" width="2.8" height="2.6"/><rect x="6.6" y="7.2" width="2.8" height="2.6"/><rect x="11" y="7.2" width="2.8" height="2.6"/><rect x="2.2" y="11.2" width="2.8" height="2.4"/><rect x="6.6" y="11.2" width="2.8" height="2.4"/><rect x="11" y="11.2" width="2.8" height="2.4"/></g></svg>
<svg style="position:absolute;left:515px;top:657px;" width="16" height="13" viewBox="0 0 16 13"><g fill="#5a5d5f"><rect x="0" y="0" width="6" height="1.6"/><rect x="9" y="0" width="7" height="1.6"/><rect x="0" y="5" width="5" height="1.6"/><rect x="8" y="5" width="8" height="1.6"/><rect x="0" y="10" width="6" height="1.6"/><rect x="9" y="10" width="7" height="1.6"/></g><path d="M9.4,0.2 L5.4,11.6" stroke="#5a5d5f" stroke-width="1.2"/></svg>
<div style="position:absolute;left:52.80px;top:689.30px;font-family:'Liberation Sans','Noto Sans CJK SC',sans-serif;font-size:13.6px;line-height:20px;color:#bbbbbb;white-space:pre;letter-spacing:-0.436px;text-rendering:geometricPrecision;">Frames</div>
<div style="position:absolute;left:129.40px;top:689.30px;font-family:'Liberation Sans','Noto Sans CJK SC',sans-serif;font-size:13.6px;line-height:20px;color:#bbbbbb;white-space:pre;letter-spacing:-0.413px;text-rendering:geometricPrecision;">Threads</div>
<div style="position:absolute;left:36px;top:714px;width:1552px;height:1px;background:#323232;"></div>
<div style="position:absolute;left:36px;top:713px;width:78px;height:2px;background:#747a80;"></div>
<div style="position:absolute;left:782px;top:682px;width:2px;height:143px;background:#323232;"></div>
<div style="position:absolute;left:784px;top:682px;width:1px;height:32px;background:#3c3f41;"></div>
<div style="position:absolute;left:40px;top:719px;width:636px;height:30px;box-sizing:border-box;border:1px solid #646464;border-radius:3.5px;background:#3c3f41"></div>
<svg style="position:absolute;left:50px;top:725px;" width="19" height="16" viewBox="0 0 19 16"><g transform="translate(0.3,0.8)"><path d="M1.2,8 L5.8,12.4 L16.4,1.6" fill="none" stroke="#c75e2a" stroke-width="3"/></g></svg>
<div style="position:absolute;left:0;top:0"><span style="position:absolute;left:74.40px;top:725.60px;font-family:'Liberation Sans','Noto Sans CJK SC',sans-serif;font-size:16.2px;line-height:20px;color:#bbbbbb;white-space:pre;letter-spacing:0.133px;text-rendering:geometricPrecision;">"main"@1 in group "main": </span><span style="position:absolute;left:273.60px;top:726.60px;font-family:'Liberation Sans','Noto Sans CJK SC',sans-serif;font-size:15.6px;line-height:20px;color:#bbbbbb;white-space:pre;letter-spacing:-0.075px;text-rendering:geometricPrecision;">RUNNING</span></div>
<svg style="position:absolute;left:656px;top:731px;" width="12" height="8" viewBox="0 0 12 8"><g transform="translate(0.6,0.8)"><polygon points="0,0 10.4,0 5.2,6" fill="#9a9c9e"/></g></svg>
<svg style="position:absolute;left:693px;top:726px;" width="13" height="16" viewBox="0 0 13 16"><g transform="translate(0,0.5)"><g><path d="M6.2,1.4 V14.8 M0.8,6.8 L6.2,1.2 L11.6,6.8" fill="none" stroke="#5c5e60" stroke-width="2"/></g></g></svg>
<svg style="position:absolute;left:724px;top:726px;" width="14" height="16" viewBox="0 0 14 16"><g transform="translate(0.6,0.5)"><g transform="rotate(180 6.2 7.5)"><path d="M6.2,1.4 V14.8 M0.8,6.8 L6.2,1.2 L11.6,6.8" fill="none" stroke="#afb1b3" stroke-width="2"/></g></g></svg>
<svg style="position:absolute;left:756px;top:726px;" width="16" height="16" viewBox="0 0 16 16"><g transform="translate(0,0.6)"><path d="M0,0 H16 L9.6,7.6 V15 H6.4 V7.6 Z" fill="#afb1b3"/></g></svg>
<div style="position:absolute;left:36px;top:755px;width:746px;height:27px;background:#4b6eaf;"></div>
<div style="position:absolute;left:771px;top:755px;width:10px;height:32px;background:rgba(166,166,166,0.28);"></div>
<div style="position:absolute;left:0;top:0"><span style="position:absolute;left:56.70px;top:759.60px;font-family:'Liberation Sans','Noto Sans CJK SC',sans-serif;font-size:15.6px;line-height:20px;color:#ced3dd;white-space:pre;letter-spacing:0.003px;text-rendering:geometricPrecision;">selectBypass:35, </span><span style="position:absolute;left:178.60px;top:759.60px;font-family:'Liberation Sans','Noto Sans CJK SC',sans-serif;font-size:15.67px;line-height:20px;color:#ced3dd;white-space:pre;letter-spacing:0.053px;text-rendering:geometricPrecision;">BypassPayloadSelector </span><span style="position:absolute;left:351.20px;top:758.60px;font-family:'Liberation Sans','Noto Sans CJK SC',sans-serif;font-size:16.2px;line-height:20px;color:#c5ccdb;white-space:pre;letter-spacing:0.148px;font-style:italic;text-rendering:geometricPrecision;">(com.supeream.weblogic)</span></div>
<div style="position:absolute;left:0;top:0"><span style="position:absolute;left:56.70px;top:786.80px;font-family:'Liberation Sans','Noto Sans CJK SC',sans-serif;font-size:15.6px;line-height:20px;color:#bbbbbb;white-space:pre;letter-spacing:0.063px;text-rendering:geometricPrecision;">serialData:45, </span><span style="position:absolute;left:158.60px;top:786.80px;font-family:'Liberation Sans','Noto Sans CJK SC',sans-serif;font-size:15.74px;line-height:20px;color:#bbbbbb;white-space:pre;letter-spacing:0.052px;text-rendering:geometricPrecision;">SerialDataGenerator </span><span style="position:absolute;left:310.00px;top:785.80px;font-family:'Liberation Sans','Noto Sans CJK SC',sans-serif;font-size:16.04px;line-height:20px;color:#8c8c8c;white-space:pre;letter-spacing:0.003px;font-style:italic;text-rendering:geometricPrecision;">(com.supeream.serial)</span></div>
<div style="position:absolute;left:0;top:0"><span style="position:absolute;left:56.70px;top:813.20px;font-family:'Liberation Sans','Noto Sans CJK SC',sans-serif;font-size:15.6px;line-height:20px;color:#bbbbbb;white-space:pre;letter-spacing:0.044px;text-rendering:geometricPrecision;">serialBlindDatas:95, </span><span style="position:absolute;left:200.80px;top:813.20px;font-family:'Liberation Sans','Noto Sans CJK SC',sans-serif;font-size:15.78px;line-height:20px;color:#bbbbbb;white-space:pre;letter-spacing:0.059px;text-rendering:geometricPrecision;">SerialDataGenerator </span><span style="position:absolute;left:352.90px;top:812.20px;font-family:'Liberation Sans','Noto Sans CJK SC',sans-serif;font-size:16.07px;line-height:20px;color:#8c8c8c;white-space:pre;letter-spacing:0.003px;font-style:italic;text-rendering:geometricPrecision;">(com.supeream.serial)</span></div>
<div style="position:absolute;left:800.80px;top:689.10px;font-family:'Liberation Sans','Noto Sans CJK SC',sans-serif;font-size:13.6px;line-height:20px;color:#bbbbbb;white-space:pre;letter-spacing:-0.234px;text-rendering:geometricPrecision;">Variables</div>
<div style="position:absolute;left:814px;top:715px;width:1px;height:110px;background:#323232;"></div>
<svg style="position:absolute;left:792px;top:725px;" width="14" height="14" viewBox="0 0 14 14"><g transform="translate(0.8,0.2)"><path d="M6.4,0 V12.8 M0,6.4 H12.8" stroke="#afb1b3" stroke-width="2.2"/></g></svg>
<div style="position:absolute;left:792.6px;top:763px;width:12.6px;height:2px;background:#5c5e60;"></div>
<svg style="position:absolute;left:794px;top:812px;" width="11" height="8" viewBox="0 0 11 8"><g transform="translate(0.6,0.7)"><path d="M0.6,0.5 L3.9,3.3 L0.6,6.1 M5.4,0.5 L8.7,3.3 L5.4,6.1" fill="none" stroke="#a4a6a8" stroke-width="1.2"/></g></svg>
<svg style="position:absolute;left:819px;top:723px;" width="11" height="13" viewBox="0 0 11 13"><g transform="translate(0,0.3)"><polygon points="0,0 10,5.6 0,11.2" fill="#a9abad"/></g></svg>
<svg style="position:absolute;left:819px;top:748px;" width="11" height="13" viewBox="0 0 11 13"><g transform="translate(0,0.4)"><polygon points="0,0 10,5.6 0,11.2" fill="#a9abad"/></g></svg>
<svg style="position:absolute;left:841px;top:720px;will-change:transform;" width="18" height="18" viewBox="0 0 18 18"><circle cx="9" cy="9" r="9" fill="#b5843b"/><text x="9.2" y="12" text-anchor="middle" font-family="Liberation Sans,sans-serif" font-size="11.6" fill="#4d3b1c">p</text></svg>
<svg style="position:absolute;left:840px;top:749px;" width="21" height="11" viewBox="0 0 21 11"><g transform="translate(0,0.6)"><circle cx="5" cy="5.2" r="3.8" fill="none" stroke="#9aa7b0" stroke-width="2.2"/><circle cx="15.6" cy="5.2" r="3.8" fill="none" stroke="#9aa7b0" stroke-width="2.2"/><path d="M8.4,3.6 Q10.3,2.4 12.2,3.6" fill="none" stroke="#9aa7b0" stroke-width="1.8"/></g></svg>
<div style="position:absolute;left:0;top:0"><span style="position:absolute;left:864.00px;top:719.40px;font-family:'Liberation Sans','Noto Sans CJK SC',sans-serif;font-size:16.2px;line-height:20px;color:#ea7370;white-space:pre;letter-spacing:0.247px;text-rendering:geometricPrecision;">payload </span><span style="position:absolute;left:927.20px;top:720.40px;font-family:'Liberation Sans','Noto Sans CJK SC',sans-serif;font-size:15.8px;line-height:20px;color:#bbbbbb;white-space:pre;text-rendering:geometricPrecision;">= </span><span style="position:absolute;left:941.40px;top:719.40px;font-family:'Liberation Sans','Noto Sans CJK SC',sans-serif;font-size:16.2px;line-height:20px;color:#808284;white-space:pre;letter-spacing:0.165px;text-rendering:geometricPrecision;">{AnnotationInvocationHandler@521}</span></div>
<div style="position:absolute;left:0;top:0"><span style="position:absolute;left:864.00px;top:745.40px;font-family:'Liberation Sans','Noto Sans CJK SC',sans-serif;font-size:15.6px;line-height:20px;color:#ea7370;white-space:pre;letter-spacing:-0.434px;text-rendering:geometricPrecision;">Main.TYPE </span><span style="position:absolute;left:944.80px;top:745.40px;font-family:'Liberation Sans','Noto Sans CJK SC',sans-serif;font-size:15.8px;line-height:20px;color:#bbbbbb;white-space:pre;text-rendering:geometricPrecision;">= </span><span style="position:absolute;left:959.40px;top:744.40px;font-family:'Liberation Sans','Noto Sans CJK SC',sans-serif;font-size:16.06px;line-height:20px;color:#5f9150;white-space:pre;letter-spacing:-0.104px;text-rendering:geometricPrecision;">"marshall"</span></div>
<div style="position:absolute;left:0px;top:825px;width:1588px;height:2px;background:#464748;"></div>
<div style="position:absolute;left:0px;top:827px;width:1588px;height:8px;background:#3c3f41;"></div>
<svg style="position:absolute;left:5px;top:832px;" width="19" height="11" viewBox="0 0 19 11"><g transform="translate(0.8,0.2)"><rect x="0.8" y="0.8" width="16.4" height="12" fill="none" stroke="#afb1b3" stroke-width="1.6"/></g></svg>
<div style="position:absolute;left:34.00px;top:829.40px;font-family:'Liberation Sans','Noto Sans CJK SC',sans-serif;font-size:16.09px;line-height:20px;color:#bbbbbb;white-space:pre;letter-spacing:0.007px;text-rendering:geometricPrecision;">Build completed successfully in 24 s 618 ms (2 minutes ago)</div>
<div style="position:absolute;left:0;top:0"><span style="position:absolute;left:1372.30px;top:805.60px;font-family:'Liberation Sans','Noto Sans CJK SC',sans-serif;font-size:14px;line-height:20px;color:#ffffff;white-space:pre;letter-spacing:-0.850px;text-rendering:geometricPrecision;">安全客</span><span style="position:absolute;left:1408.40px;top:805.60px;font-family:'Liberation Sans','Noto Sans CJK SC',sans-serif;font-size:14px;line-height:20px;color:#ffffff;white-space:pre;text-rendering:geometricPrecision;">（</span><span style="position:absolute;left:1428.20px;top:806.60px;font-family:'Liberation Sans','Noto Sans CJK SC',sans-serif;font-size:15.05px;line-height:20px;color:#ffffff;white-space:pre;letter-spacing:0.011px;text-rendering:geometricPrecision;">www.anquanke.com</span><span style="position:absolute;left:1566.80px;top:805.60px;font-family:'Liberation Sans','Noto Sans CJK SC',sans-serif;font-size:14px;line-height:20px;color:#ffffff;white-space:pre;text-rendering:geometricPrecision;">）</span></div>
</div></body></html>
